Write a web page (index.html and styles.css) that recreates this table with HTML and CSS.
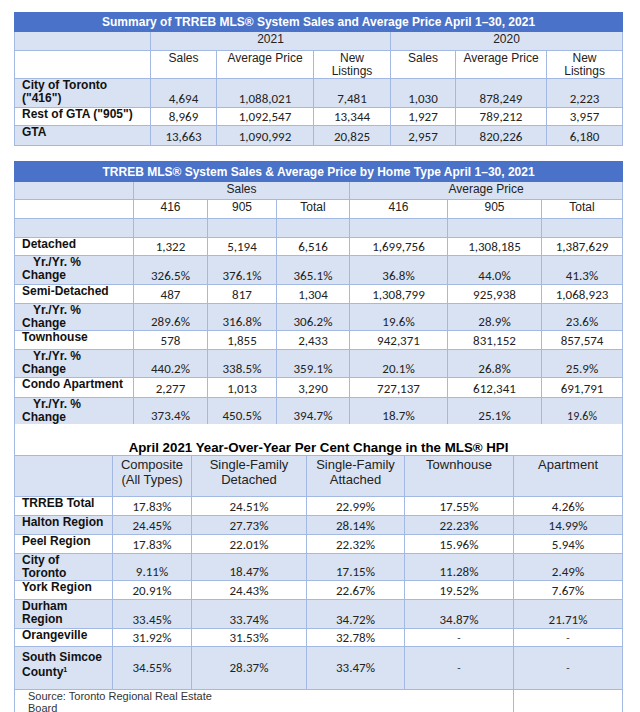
FILE: index.html
```html
<!DOCTYPE html>
<html>
<head>
<meta charset="utf-8">
<link rel="stylesheet" href="styles.css">
</head>
<body>
<div class="page">
<table class="t t1">
  <colgroup>
    <col style="width:136px"><col style="width:66px"><col style="width:97px"><col style="width:77px"><col style="width:65px"><col style="width:91px"><col style="width:76px">
  </colgroup>
  <tr class="title r19"><td colspan="7">Summary of TRREB MLS® System Sales and Average Price April 1–30, 2021</td></tr>
  <tr class="alt r19"><td></td><td colspan="3" class="hd">2021</td><td colspan="3" class="hd">2020</td></tr>
  <tr class="r28"><td></td><td class="hd">Sales</td><td class="hd">Average Price</td><td class="hd">New<br>Listings</td><td class="hd">Sales</td><td class="hd">Average Price</td><td class="hd">New<br>Listings</td></tr>
  <tr class="alt r29"><td class="lb">City of Toronto<br>("416")</td><td class="n">4,694</td><td class="n">1,088,021</td><td class="n">7,481</td><td class="n">1,030</td><td class="n">878,249</td><td class="n">2,223</td></tr>
  <tr class="r18"><td class="lb">Rest of GTA ("905")</td><td class="n">8,969</td><td class="n">1,092,547</td><td class="n">13,344</td><td class="n">1,927</td><td class="n">789,212</td><td class="n">3,957</td></tr>
  <tr class="alt r20"><td class="lb">GTA</td><td class="n">13,663</td><td class="n">1,090,992</td><td class="n">20,825</td><td class="n">2,957</td><td class="n">820,226</td><td class="n">6,180</td></tr>
</table>

<table class="t t2">
  <colgroup>
    <col style="width:119px"><col style="width:74px"><col style="width:69px"><col style="width:73px"><col style="width:98px"><col style="width:94px"><col style="width:81px">
  </colgroup>
  <tr class="title r20"><td colspan="7">TRREB MLS® System Sales &amp; Average Price by Home Type April 1–30, 2021</td></tr>
  <tr class="alt r18"><td></td><td colspan="3" class="hd">Sales</td><td colspan="3" class="hd">Average Price</td></tr>
  <tr class="r19"><td></td><td class="hd">416</td><td class="hd">905</td><td class="hd">Total</td><td class="hd">416</td><td class="hd">905</td><td class="hd">Total</td></tr>
  <tr class="alt r19"><td></td><td></td><td></td><td></td><td></td><td></td><td></td></tr>
  <tr class="r18"><td class="lb">Detached</td><td class="n">1,322</td><td class="n">5,194</td><td class="n">6,516</td><td class="n">1,699,756</td><td class="n">1,308,185</td><td class="n">1,387,629</td></tr>
  <tr class="alt r29"><td class="lb yr">Yr./Yr. %<br>Change</td><td class="n">326.5%</td><td class="n">376.1%</td><td class="n">365.1%</td><td class="n">36.8%</td><td class="n">44.0%</td><td class="n">41.3%</td></tr>
  <tr class="r19"><td class="lb">Semi-Detached</td><td class="n">487</td><td class="n">817</td><td class="n">1,304</td><td class="n">1,308,799</td><td class="n">925,938</td><td class="n">1,068,923</td></tr>
  <tr class="alt r27"><td class="lb yr">Yr./Yr. %<br>Change</td><td class="n">289.6%</td><td class="n">316.8%</td><td class="n">306.2%</td><td class="n">19.6%</td><td class="n">28.9%</td><td class="n">23.6%</td></tr>
  <tr class="r19"><td class="lb">Townhouse</td><td class="n">578</td><td class="n">1,855</td><td class="n">2,433</td><td class="n">942,371</td><td class="n">831,152</td><td class="n">857,574</td></tr>
  <tr class="alt r28"><td class="lb yr">Yr./Yr. %<br>Change</td><td class="n">440.2%</td><td class="n">338.5%</td><td class="n">359.1%</td><td class="n">20.1%</td><td class="n">26.8%</td><td class="n">25.9%</td></tr>
  <tr class="r20"><td class="lb">Condo Apartment</td><td class="n">2,277</td><td class="n">1,013</td><td class="n">3,290</td><td class="n">727,137</td><td class="n">612,341</td><td class="n">691,791</td></tr>
  <tr class="alt r27"><td class="lb yr">Yr./Yr. %<br>Change</td><td class="n">373.4%</td><td class="n">450.5%</td><td class="n">394.7%</td><td class="n">18.7%</td><td class="n">25.1%</td><td class="n sm">19.6%</td></tr>
</table>

<table class="t t3">
  <colgroup>
    <col style="width:98px"><col style="width:79px"><col style="width:115px"><col style="width:98px"><col style="width:109px"><col style="width:109px">
  </colgroup>
  <tr class="r31"><td colspan="6" class="t3title">April 2021 Year-Over-Year Per Cent Change in the MLS® HPI</td></tr>
  <tr class="alt r41"><td></td><td class="hd hd3">Composite<br>(All Types)</td><td class="hd hd3">Single-Family<br>Detached</td><td class="hd hd3">Single-Family<br>Attached</td><td class="hd hd3">Townhouse</td><td class="hd hd3">Apartment</td></tr>
  <tr class="r19"><td class="lb">TRREB Total</td><td class="n">17.83%</td><td class="n">24.51%</td><td class="n">22.99%</td><td class="n">17.55%</td><td class="n">4.26%</td></tr>
  <tr class="alt r19"><td class="lb">Halton Region</td><td class="n">24.45%</td><td class="n">27.73%</td><td class="n">28.14%</td><td class="n">22.23%</td><td class="n">14.99%</td></tr>
  <tr class="r19"><td class="lb">Peel Region</td><td class="n">17.83%</td><td class="n">22.01%</td><td class="n">22.32%</td><td class="n">15.96%</td><td class="n">5.94%</td></tr>
  <tr class="alt r27"><td class="lb">City of<br>Toronto</td><td class="n">9.11%</td><td class="n">18.47%</td><td class="n">17.15%</td><td class="n">11.28%</td><td class="n">2.49%</td></tr>
  <tr class="r19"><td class="lb">York Region</td><td class="n">20.91%</td><td class="n">24.43%</td><td class="n">22.67%</td><td class="n">19.52%</td><td class="n">7.67%</td></tr>
  <tr class="alt r29"><td class="lb">Durham<br>Region</td><td class="n">33.45%</td><td class="n">33.74%</td><td class="n">34.72%</td><td class="n">34.87%</td><td class="n">21.71%</td></tr>
  <tr class="r18"><td class="lb">Orangeville</td><td class="n">31.92%</td><td class="n">31.53%</td><td class="n">32.78%</td><td class="n dash">-</td><td class="n dash">-</td></tr>
  <tr class="alt r43"><td class="lb lbm">South Simcoe<br>County<sup>1</sup></td><td class="n nm">34.55%</td><td class="n nm">28.37%</td><td class="n nm">33.47%</td><td class="n nm dash">-</td><td class="n nm dash">-</td></tr>
  <tr class="r40"><td colspan="5" class="src"><span>Source: Toronto Regional Real Estate Board</span></td><td></td></tr>
</table>
</div>
</body>
</html>
```
FILE: styles.css
```css
html, body {
  margin: 0;
  padding: 0;
  background: #ffffff;
  overflow: hidden;
}
.page {
  padding: 12px 0 0 14px;
}
.t {
  border-collapse: collapse;
  table-layout: fixed;
  width: 608px;
  font-family: "Liberation Sans", Arial, sans-serif;
  font-size: 12px;
  color: #1a1a1a;
}
.t td {
  border: 1px solid #a3b8e3;
  padding: 0 2px;
  overflow: hidden;
  white-space: nowrap;
}
.t1 { margin-bottom: 15px; }
.t tr.title td {
  background: #4a72c8;
  color: #ffffff;
  font-weight: bold;
  text-align: center;
  vertical-align: middle;
  border-color: #4a72c8;
  line-height: 14px;
}
.t tr.alt td { background: #d9e2f3; }
.r18 { height: 18px; }
.r19 { height: 19px; }
.r20 { height: 20px; }
.r27 { height: 27px; }
.r28 { height: 28px; }
.r29 { height: 29px; }
.r31 { height: 31px; }
.r40 { height: 40px; }
.r41 { height: 41px; }
.r43 { height: 43px; }
.t td.hd {
  text-align: center;
  vertical-align: top;
  line-height: 13px;
  padding-top: 1px;
  color: #222;
}
.t td.hd3 {
  font-size: 13px;
  line-height: 15px;
  padding-top: 1px;
}
.t td.lb {
  font-weight: bold;
  vertical-align: top;
  line-height: 13px;
  padding-left: 7px;
  padding-top: 0;
  color: #111;
}
.t td.yr {
  text-indent: 11px;
  padding-top: 0;
}
.t td.n {
  font-family: Carlito, Calibri, Lato, "Open Sans", sans-serif;
  font-size: 13px;
  text-align: center;
  vertical-align: bottom;
  line-height: 16px;
  color: #222;
}
.t td.sm { font-size: 12px; }
.t td.dash { font-size: 11px; }
.t td.nm { vertical-align: middle; }
.t td.lbm {
  padding-top: 3px;
  line-height: 15px;
}
sup {
  font-size: 7px;
  line-height: 0;
  vertical-align: 4px;
}
.t3 td.t3title {
  background: #fff;
  border-top: none;
  border-bottom: 1px solid #a3b8e3;
  text-align: center;
  vertical-align: bottom;
  font-weight: bold;
  font-size: 13.3px;
  color: #000;
  padding-bottom: 0;
  line-height: 15px;
}
.t3 { margin-top: -1px; }
.t td.src {
  vertical-align: top;
  padding-left: 13px;
  border-bottom: none;
}
.src span {
  display: block;
  width: 185px;
  white-space: normal;
  font-size: 11px;
  line-height: 12px;
  color: #333;
  padding-top: 0;
}
```
